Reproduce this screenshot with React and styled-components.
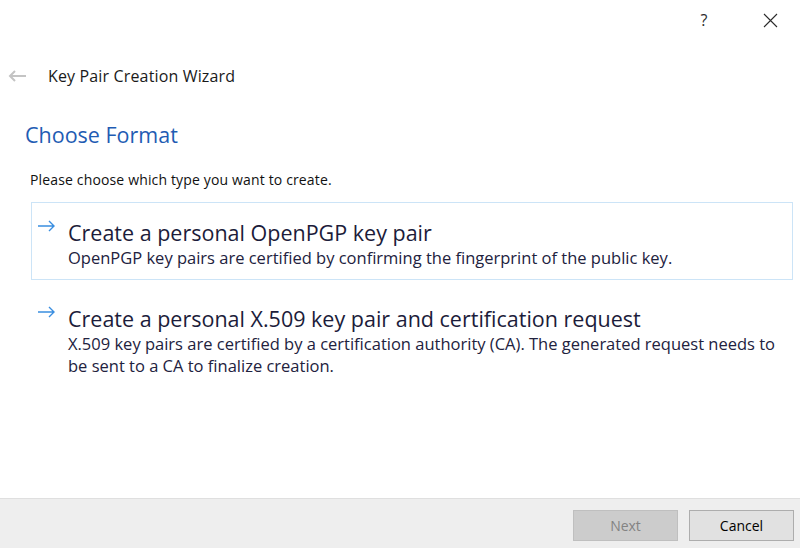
import styled, { createGlobalStyle } from 'styled-components'

const GlobalStyle = createGlobalStyle`
  html, body {
    margin: 0;
    padding: 0;
    background: #ffffff;
  }
  body {
    font-family: 'Open Sans', 'Noto Sans', 'Liberation Sans', sans-serif;
    color: #1a1a1a;
  }
`

const options = [
  {
    id: 'pgp',
    title: 'Create a personal OpenPGP key pair',
    lines: [
      'OpenPGP key pairs are certified by confirming the fingerprint of the public key.',
    ],
    focused: true,
  },
  {
    id: 'x509',
    title: 'Create a personal X.509 key pair and certification request',
    lines: [
      'X.509 key pairs are certified by a certification authority (CA). The generated request needs to',
      'be sent to a CA to finalize creation.',
    ],
    focused: false,
  },
]

export default function App() {
  return (
    <>
      <GlobalStyle />
      <Dialog>
        <TitleBar>
          <CaptionButton aria-label="Help">?</CaptionButton>
          <CaptionButton aria-label="Close">
            <svg width="15" height="15" viewBox="0 0 15 15">
              <path d="M1 1 L14 14 M14 1 L1 14" stroke="#2b2b2b" strokeWidth="1.1" fill="none" />
            </svg>
          </CaptionButton>
        </TitleBar>

        <WizardHeader>
          <BackButton aria-label="Back">
            <svg width="18" height="12" viewBox="0 0 18 12">
              <path d="M18 6 H2 M7 1 L2 6 L7 11" stroke="#c4c4c4" strokeWidth="2" fill="none" />
            </svg>
          </BackButton>
          <WizardTitle>Key Pair Creation Wizard</WizardTitle>
        </WizardHeader>

        <Content>
          <PageTitle>Choose Format</PageTitle>
          <Prompt>Please choose which type you want to create.</Prompt>
          <OptionList>
            {options.map((opt) => (
              <OptionButton key={opt.id} focused={opt.focused}>
                <ArrowIcon>
                  <svg width="18" height="12" viewBox="0 0 18 12">
                    <path d="M0 6 H16 M11 1 L16 6 L11 11" stroke="#3a8ee0" strokeWidth="1.4" fill="none" />
                  </svg>
                </ArrowIcon>
                <OptionText>
                  <OptionTitle>{opt.title}</OptionTitle>
                  {opt.lines.map((line) => (
                    <OptionDesc key={line}>{line}</OptionDesc>
                  ))}
                </OptionText>
              </OptionButton>
            ))}
          </OptionList>
        </Content>

        <Footer>
          <PushButton disabled>Next</PushButton>
          <PushButton>Cancel</PushButton>
        </Footer>
      </Dialog>
    </>
  )
}

const Dialog = styled.div`
  width: 800px;
  height: 548px;
  display: flex;
  flex-direction: column;
  background: #ffffff;
  overflow: hidden;
`

const TitleBar = styled.div`
  height: 40px;
  display: flex;
  justify-content: flex-end;
  align-items: center;
  gap: 6px;
`

const CaptionButton = styled.div`
  width: 60px;
  height: 40px;
  display: flex;
  align-items: center;
  justify-content: center;
  font-size: 16px;
  color: #2b2b2b;
`

const WizardHeader = styled.div`
  margin-top: 20px;
  height: 32px;
  display: flex;
  align-items: center;
`

const BackButton = styled.div`
  width: 40px;
  padding-left: 8px;
  display: flex;
  align-items: center;
`

const WizardTitle = styled.div`
  font-size: 16px;
  letter-spacing: 0.15px;
  color: #1a1a1a;
`

const Content = styled.div`
  display: flex;
  flex-direction: column;
  flex: 1;
`

const PageTitle = styled.div`
  margin: 29px 0 0 25px;
  height: 28px;
  line-height: 28px;
  font-size: 21.5px;
  color: #1f5cb3;
`

const Prompt = styled.div`
  margin: 23px 0 0 30px;
  height: 16px;
  line-height: 16px;
  font-size: 14px;
  letter-spacing: 0.15px;
  color: #111111;
`

const OptionList = styled.div`
  margin: 14px 0 0 31px;
  width: 762px;
  display: flex;
  flex-direction: column;
  gap: 8px;
`

const OptionButton = styled.div`
  display: flex;
  align-items: flex-start;
  padding: 16px 0 10px 6px;
  border: 1px solid ${({ focused }) => (focused ? '#cce4f7' : 'transparent')};
  background: #ffffff;
`

const ArrowIcon = styled.div`
  width: 30px;
  height: 14px;
  display: flex;
  align-items: center;
`

const OptionText = styled.div`
  display: flex;
  flex-direction: column;
`

const OptionTitle = styled.div`
  font-size: 21.5px;
  line-height: 28px;
  color: #1c1c3a;
`

const OptionDesc = styled.div`
  font-size: 16.5px;
  line-height: 22px;
  color: #22223e;
`

const Footer = styled.div`
  height: 50px;
  border-top: 1px solid #dfdfdf;
  background: #eeeeee;
  display: flex;
  justify-content: flex-end;
  align-items: flex-start;
  gap: 11px;
  padding: 11px 6px 0 0;
  box-sizing: border-box;
`

const PushButton = styled.button`
  width: 105px;
  height: 31px;
  box-sizing: border-box;
  font-family: inherit;
  font-size: 14px;
  border: 1px solid ${({ disabled }) => (disabled ? '#bfbfbf' : '#adadad')};
  background: ${({ disabled }) => (disabled ? '#cccccc' : '#e1e1e1')};
  color: ${({ disabled }) => (disabled ? '#838383' : '#000000')};
  border-radius: 0;
  padding: 0;
`
